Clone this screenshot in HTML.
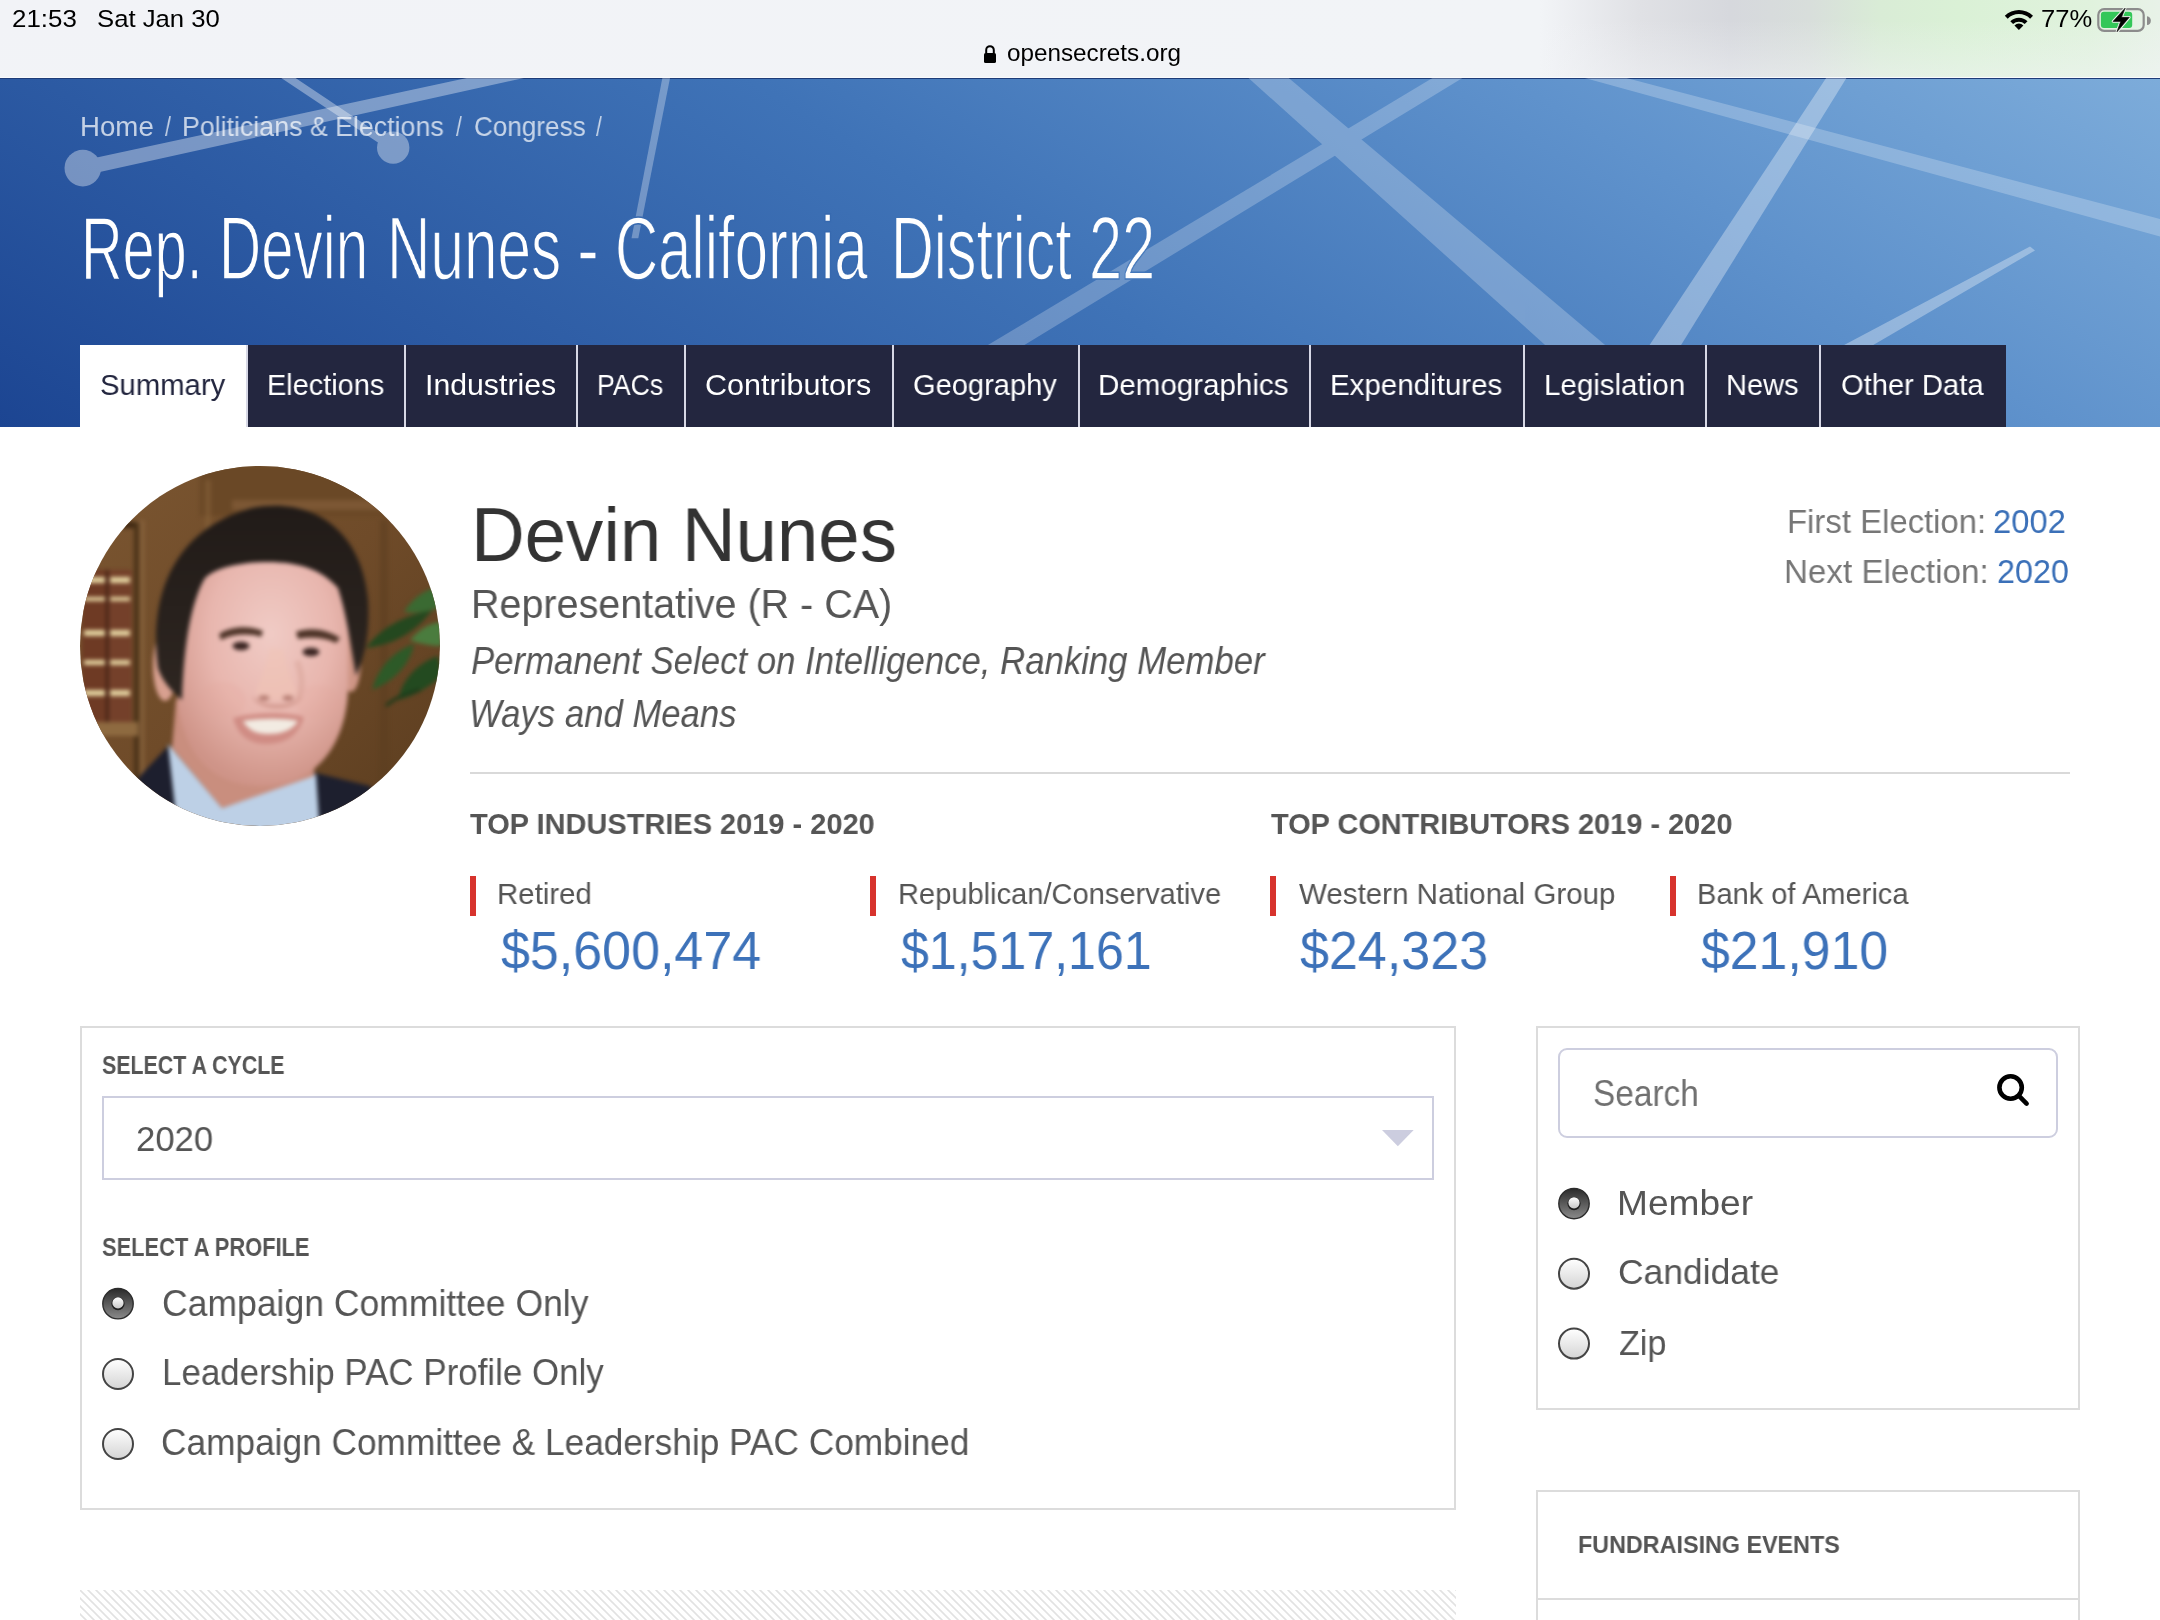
<!DOCTYPE html>
<html><head><meta charset="utf-8">
<style>
*{margin:0;padding:0;box-sizing:border-box}
html,body{width:2160px;height:1620px;overflow:hidden;background:#fff}
body{position:relative;font-family:"Liberation Sans",sans-serif}
.t{position:absolute;white-space:nowrap;transform-origin:0 0;will-change:transform}
.abs{position:absolute}
#status{left:0;top:0;width:2160px;height:78px;background:linear-gradient(90deg,#f2f3f7 0px,#f2f4f7 1540px,#e0e1e5 1640px,#d6d8dd 1730px,#d8dedb 1810px,#d9ecd6 1880px,#daf1d6 1960px,#e0f2dd 2090px,#e8f2e8 2160px)}
#statusfade{left:0;top:0;width:2160px;height:78px;background:linear-gradient(180deg,rgba(242,244,247,0) 0px,rgba(242,244,247,0) 20px,rgba(242,244,247,.45) 77px)}
#hdr{left:0;top:78px;width:2160px;height:349px;overflow:hidden;background:linear-gradient(32deg,#1c4592 0%,#3f73b7 48%,#5f92cc 76%,#7dacda 100%)}
.tab{position:absolute;top:345px;height:82px;background:#23263f}
.box{position:absolute;border:2px solid #dcdcdc;background:#fff}
.redbar{position:absolute;width:6px;height:40px;background:#d7332d}
</style></head>
<body>
<!-- STATUS BAR -->
<div id="status" class="abs"></div>
<div id="statusfade" class="abs"></div>
<div class="abs" style="left:0;top:77px;width:2160px;height:1px;background:#fafbfd"></div>
<svg class="abs" style="left:0;top:0" width="2160" height="78" viewBox="0 0 2160 78">
  <!-- lock -->
  <path d="M986.2 53.5 V50 A3.8 3.8 0 0 1 993.8 50 V53.5" fill="none" stroke="#000" stroke-width="2"/>
  <rect x="984" y="53" width="12" height="10" rx="1.6" fill="#000"/>
  <!-- wifi -->
  <g fill="#000">
    <path d="M2018.9 29.9 L2014.45 25.45 A6.3 6.3 0 0 1 2023.35 25.45 Z"/>
    <path d="M2010.3 21.3 A12.2 12.2 0 0 1 2027.5 21.3 L2024.7 24.1 A8.2 8.2 0 0 0 2013.1 24.1 Z"/>
    <path d="M2004.8 15.8 A20 20 0 0 1 2033 15.8 L2030.1 18.7 A15.9 15.9 0 0 0 2007.7 18.7 Z"/>
  </g>
  <!-- battery -->
  <rect x="2098.3" y="9.2" width="45.4" height="21.6" rx="5.8" fill="none" stroke="#8c8c8c" stroke-width="2.2"/>
  <path d="M2147 16.2 A4.5 4.5 0 0 1 2147 25.1 Z" fill="#8c8c8c"/>
  <rect x="2100.9" y="11.8" width="31.3" height="16.3" rx="3" fill="#34c759"/>
  <path d="M2125.2 8.1 L2113 21.4 L2120.7 21.4 L2117 31.8 L2129.3 17.3 L2121.5 17.3 Z" fill="#eef5ec" stroke="#eef5ec" stroke-width="2.6" stroke-linejoin="round"/>
  <path d="M2125.2 8.1 L2113 21.4 L2120.7 21.4 L2117 31.8 L2129.3 17.3 L2121.5 17.3 Z" fill="#000" stroke="#000" stroke-width=".6" stroke-linejoin="round"/>
</svg>

<!-- HEADER -->
<div id="hdr" class="abs">
<div class="abs" style="left:0;top:0;width:2160px;height:1px;background:#1e3c78"></div>
<svg class="abs" style="left:0;top:0" width="2160" height="349" viewBox="0 78 2160 349">
  <g fill="#ffffff" opacity=".36">
    <polygon points="82.8,160.4 560,58 560,70 82.8,175.8"/>
    <circle cx="82.8" cy="168.1" r="18.3"/>
  </g>
  <g fill="#ffffff" opacity=".36">
    <polygon points="278.6,66.7 395.1,144.4 390.7,151 274.2,73.3"/>
    <circle cx="393.2" cy="147.6" r="16.2"/>
  </g>
  <g fill="#ffffff" opacity=".30">
    <polygon points="663.9,70 671.6,70 638.3,238.2 631.5,238.2"/>
  </g>
  <g fill="#ffffff" opacity=".23">
    <polygon points="1239.6,70 1279.2,70 1611,350 1550.6,350"/>
    <polygon points="1445.8,70 1475.6,70 1016.2,350 979.6,350"/>
    <polygon points="1550,57.8 2170,221.7 2170,239.3 1550,68.4"/>
  </g>
  <g fill="#ffffff" opacity=".33">
    <polygon points="1831.4,70 1851.4,70 1678,350 1646.3,350"/>
    <polygon points="2030,246.5 2035,250.5 1864.7,350 1834.7,350"/>
  </g>
</svg>
</div>

<!-- TABS -->
<div class="abs" style="left:80px;top:345px;width:166px;height:82px;background:#fff"></div>
<div class="abs" style="left:246px;top:345px;width:1760px;height:82px;background:#d6d7e5"></div>
<div class="tab" style="left:248px;width:156px"></div>
<div class="tab" style="left:406px;width:170px"></div>
<div class="tab" style="left:578px;width:106px"></div>
<div class="tab" style="left:686px;width:206px"></div>
<div class="tab" style="left:894px;width:184px"></div>
<div class="tab" style="left:1080px;width:229px"></div>
<div class="tab" style="left:1311px;width:212px"></div>
<div class="tab" style="left:1525px;width:180px"></div>
<div class="tab" style="left:1707px;width:112px"></div>
<div class="tab" style="left:1821px;width:185px"></div>

<svg class="abs" style="left:80px;top:466px" width="360" height="360" viewBox="80 466 360 360">
  <defs>
    <clipPath id="pc"><circle cx="260" cy="646" r="180"/></clipPath>
    <linearGradient id="wood" x1="0" y1="0" x2="1" y2="1">
      <stop offset="0" stop-color="#7b5631"/>
      <stop offset=".5" stop-color="#6f4b29"/>
      <stop offset="1" stop-color="#5b3d1f"/>
    </linearGradient>
    <radialGradient id="skin" cx=".55" cy=".35" r=".65">
      <stop offset="0" stop-color="#f0cbc5"/>
      <stop offset=".55" stop-color="#e8b6ae"/>
      <stop offset="1" stop-color="#cf9488"/>
    </radialGradient>
    <linearGradient id="hair" x1="0" y1="0" x2="0" y2="1">
      <stop offset="0" stop-color="#211b18"/>
      <stop offset="1" stop-color="#2e2621"/>
    </linearGradient>
    <filter id="soft" filterUnits="userSpaceOnUse" x="60" y="446" width="400" height="400" color-interpolation-filters="sRGB"><feGaussianBlur stdDeviation="2"/></filter>
  </defs>
  <g clip-path="url(#pc)">
    <rect x="80" y="466" width="360" height="360" fill="url(#wood)"/>
    <g filter="url(#soft)">
    <!-- wood panels -->
    <rect x="200" y="466" width="240" height="50" fill="#6a4826"/>
    <rect x="205" y="480" width="6" height="350" fill="#866038" opacity=".6"/>
    <rect x="232" y="500" width="208" height="10" fill="#8a6440" opacity=".55"/>
    <rect x="135" y="520" width="10" height="310" fill="#8b6540" opacity=".6"/>
    <rect x="380" y="520" width="8" height="300" fill="#5c3e20" opacity=".5"/>
    <!-- books -->
    <rect x="80" y="522" width="58" height="6" fill="#3e2712"/>
    <rect x="134" y="522" width="5" height="310" fill="#4a3218"/>
    <rect x="82" y="570" width="25" height="152" fill="#6e3a24"/>
    <rect x="108" y="570" width="24" height="152" fill="#74402a"/>
    <rect x="106" y="570" width="2.5" height="152" fill="#3e1f12"/>
    <g fill="#e4d3a0">
      <rect x="84" y="577" width="21" height="6"/><rect x="110" y="577" width="20" height="6"/>
      <rect x="84" y="597" width="21" height="4"/><rect x="110" y="597" width="20" height="4"/>
      <rect x="84" y="630" width="21" height="6"/><rect x="110" y="630" width="20" height="6"/>
      <rect x="84" y="660" width="21" height="5"/><rect x="110" y="660" width="20" height="5"/>
      <rect x="84" y="690" width="21" height="6"/><rect x="110" y="690" width="20" height="6"/>
    </g>
    <rect x="80" y="722" width="58" height="14" fill="#8e6a40"/>
    <!-- plant -->
    <g>
      <path d="M366 648 C380 628 405 615 432 610 C418 630 395 645 366 648 Z" fill="#24481f"/>
      <path d="M404 612 C414 596 428 588 442 586 L442 606 C430 612 418 614 404 612 Z" fill="#3a6a32"/>
      <path d="M372 690 C378 668 392 652 414 644 C410 664 396 680 372 690 Z" fill="#2d5a28"/>
      <path d="M398 700 C402 680 416 664 438 656 L442 676 C428 688 414 696 398 700 Z" fill="#234a20"/>
      <path d="M410 640 C420 628 432 622 442 622 L442 646 C432 646 420 644 410 640 Z" fill="#4a7c3e"/>
      <path d="M386 706 C392 700 404 694 420 690" stroke="#1c3a1a" stroke-width="3" fill="none"/>
    </g>
    <!-- suit -->
    <path d="M110 835 L140 776 L170 744 L185 835 Z" fill="#1d1f2e"/>
    <path d="M312 772 L370 786 L400 835 L310 835 Z" fill="#1d1f2e"/>
    <!-- shirt -->
    <path d="M168 744 L222 808 L316 774 L320 835 L178 835 Z" fill="#bdd0e6"/>
    <!-- neck -->
    <path d="M176 700 L318 700 L314 776 L222 808 L172 748 Z" fill="#c98e7e"/>
    <!-- ears -->
    <ellipse cx="165" cy="666" rx="12" ry="35" fill="#d8a090"/>
    <ellipse cx="351" cy="660" rx="10" ry="32" fill="#cf9686"/>
    <!-- face -->
    <path d="M176 610 C176 565 212 552 262 552 C315 552 348 566 348 612 L348 690 C346 742 318 786 262 786 C206 786 180 745 177 695 Z" fill="url(#skin)"/>
    <!-- hair -->
    <path d="M158 668 C148 590 178 528 252 508 C312 496 362 530 368 600 C370 635 364 658 356 676 C350 640 346 612 338 588 C322 570 300 562 268 562 C240 562 215 568 205 578 C192 600 184 640 182 700 C170 690 162 680 158 668 Z" fill="url(#hair)"/>
    <!-- brows -->
    <path d="M219 634 C230 626 250 625 263 631 L261 637 C249 633 233 634 221 640 Z" fill="#4e3428"/>
    <path d="M296 632 C309 627 327 629 340 638 L336 643 C324 637 310 637 298 639 Z" fill="#4e3428"/>
    <!-- eyes -->
    <ellipse cx="241" cy="646" rx="8.5" ry="4.2" fill="#3a2522"/>
    <ellipse cx="311" cy="652" rx="8.5" ry="4.2" fill="#3a2522"/>
    <!-- nose -->
    <path d="M270 648 C266 668 258 684 256 693 C262 702 290 703 298 693 C292 682 286 668 284 650 Z" fill="#f0c4b6" opacity=".55"/>
    <path d="M252 696 C262 708 292 708 302 696 C296 712 258 712 252 696 Z" fill="#b87466" opacity=".55"/>
    <ellipse cx="264" cy="698" rx="5.5" ry="2.8" fill="#9a5a50" opacity=".65"/>
    <ellipse cx="288" cy="698" rx="5.5" ry="2.8" fill="#9a5a50" opacity=".65"/>
    <path d="M300 660 C306 676 306 690 300 700 L296 698 C300 688 300 676 294 662 Z" fill="#c48676" opacity=".25"/>
    <!-- cheeks -->
    <ellipse cx="222" cy="700" rx="24" ry="18" fill="#e6a49a" opacity=".18"/>
    <ellipse cx="318" cy="702" rx="22" ry="17" fill="#e6a49a" opacity=".18"/>
    <!-- mouth -->
    <path d="M233 718 C256 712 286 712 304 717 C298 738 282 744 266 744 C250 744 238 736 233 718 Z" fill="#d08c84"/>
    <path d="M243 721 C262 718 284 718 298 721 C292 731 280 734 268 734 C256 734 248 730 243 721 Z" fill="#f2ebe2"/>
    </g>
  </g>
</svg>


<!-- separator -->
<div class="abs" style="left:470px;top:772px;width:1600px;height:2px;background:#d9d9d9"></div>
<!-- red bars -->
<div class="redbar" style="left:470px;top:876px"></div>
<div class="redbar" style="left:870px;top:876px"></div>
<div class="redbar" style="left:1270px;top:876px"></div>
<div class="redbar" style="left:1670px;top:876px"></div>

<!-- LOWER LEFT BOX -->
<div class="box" style="left:80px;top:1026px;width:1376px;height:484px"></div>
<div class="abs" style="left:102px;top:1096px;width:1332px;height:84px;border:2px solid #cdcedf;background:#fff"></div>
<svg class="abs" style="left:1382px;top:1130px" width="32" height="17" viewBox="0 0 32 17"><path d="M0 0 H31.7 L15.85 16.2 Z" fill="#cccddf"/></svg>
<svg class="abs" style="left:80px;top:1590px" width="1376" height="30" viewBox="0 0 1376 30">
  <defs><pattern id="hatch" x="0" y="0" width="8" height="8" patternUnits="userSpaceOnUse">
    <path d="M-2 -2 L10 10 M-2 6 L2 10 M6 -2 L10 2" stroke="#e2e2e2" stroke-width="1.6"/>
  </pattern></defs>
  <rect x="0" y="0" width="1376" height="30" fill="url(#hatch)"/>
</svg>

<!-- RIGHT BOX -->
<div class="box" style="left:1536px;top:1026px;width:544px;height:384px"></div>
<div class="abs" style="left:1558px;top:1048px;width:500px;height:90px;border:2px solid #cdcedf;border-radius:9px;background:#fff"></div>
<svg class="abs" style="left:1990px;top:1068px" width="44" height="44" viewBox="1990 1068 44 44">
  <circle cx="2010.6" cy="1087.5" r="11.2" fill="none" stroke="#000" stroke-width="4.6"/>
  <line x1="2019.2" y1="1096.2" x2="2026.6" y2="1103.6" stroke="#000" stroke-width="4.6" stroke-linecap="round"/>
</svg>
<div class="box" style="left:1536px;top:1490px;width:544px;height:200px"></div>
<div class="abs" style="left:1538px;top:1598px;width:540px;height:2px;background:#dcdcdc"></div>

<svg class="abs" style="left:0;top:1180px" width="2160" height="290" viewBox="0 1180 2160 290">
  <defs>
    <linearGradient id="rOn" x1="0" y1="0" x2="0" y2="1"><stop offset="0" stop-color="#2a2a2a"/><stop offset="1" stop-color="#8a8a8a"/></linearGradient>
    <linearGradient id="rDot" x1="0" y1="0" x2="0" y2="1"><stop offset="0" stop-color="#ffffff"/><stop offset="1" stop-color="#c8c8c8"/></linearGradient>
    <linearGradient id="rOff" x1="0" y1="0" x2="0" y2="1"><stop offset="0" stop-color="#ffffff"/><stop offset="1" stop-color="#d4d4d4"/></linearGradient>
  </defs>
  <g id="on1">
    <circle cx="118" cy="1303.7" r="15.2" fill="url(#rOn)" stroke="#2c2c2c" stroke-width="1.4"/>
    <circle cx="118" cy="1303.7" r="6.6" fill="#1e1e1e"/>
    <circle cx="118" cy="1302.9" r="5.6" fill="url(#rDot)"/>
  </g>
  <circle cx="118" cy="1374" r="15" fill="url(#rOff)" stroke="#444" stroke-width="2"/>
  <circle cx="118" cy="1444" r="15" fill="url(#rOff)" stroke="#444" stroke-width="2"/>
  <g>
    <circle cx="1574" cy="1203.6" r="15.2" fill="url(#rOn)" stroke="#2c2c2c" stroke-width="1.4"/>
    <circle cx="1574" cy="1203.6" r="6.6" fill="#1e1e1e"/>
    <circle cx="1574" cy="1202.8" r="5.6" fill="url(#rDot)"/>
  </g>
  <circle cx="1574" cy="1273.7" r="15" fill="url(#rOff)" stroke="#444" stroke-width="2"/>
  <circle cx="1574" cy="1343.6" r="15" fill="url(#rOff)" stroke="#444" stroke-width="2"/>
</svg>


<div class="t" style="left:11.95px;top:8.11px;font-size:23.26px;line-height:23.26px;color:#000;transform:scaleX(1.1134);">21:53</div>
<div class="t" style="left:97.19px;top:8.11px;font-size:23.26px;line-height:23.26px;color:#000;transform:scaleX(1.1054);">Sat Jan 30</div>
<div class="t" style="left:1006.99px;top:41.27px;font-size:24.13px;line-height:24.13px;color:#000;transform:scaleX(1.0055);">opensecrets.org</div>
<div class="t" style="left:2040.71px;top:7.08px;font-size:24.71px;line-height:24.71px;color:#000;transform:scaleX(1.0347);">77%</div>
<div class="t" style="left:79.83px;top:114.11px;font-size:27.04px;line-height:27.04px;color:rgba(255,255,255,.72);transform:scaleX(1.0229);">Home</div>
<div class="t" style="left:164.50px;top:114.11px;font-size:27.04px;line-height:27.04px;color:rgba(255,255,255,.72);transform:scaleX(0.7869);">/</div>
<div class="t" style="left:182.20px;top:114.11px;font-size:27.04px;line-height:27.04px;color:rgba(255,255,255,.72);transform:scaleX(0.9896);">Politicians &amp; Elections</div>
<div class="t" style="left:455.60px;top:114.11px;font-size:27.04px;line-height:27.04px;color:rgba(255,255,255,.72);transform:scaleX(0.7738);">/</div>
<div class="t" style="left:473.59px;top:114.11px;font-size:27.04px;line-height:27.04px;color:rgba(255,255,255,.72);transform:scaleX(0.9652);">Congress</div>
<div class="t" style="left:596.30px;top:114.11px;font-size:27.04px;line-height:27.04px;color:rgba(255,255,255,.72);transform:scaleX(0.7738);">/</div>
<div class="t" style="left:81.00px;top:203.65px;font-size:89.83px;line-height:89.83px;color:#ffffff;transform:scaleX(0.6414);-webkit-text-stroke:1.5px rgb(39,84,158);">Rep.</div>
<div class="t" style="left:219.19px;top:203.65px;font-size:89.83px;line-height:89.83px;color:#ffffff;transform:scaleX(0.6492);-webkit-text-stroke:1.5px rgb(43,89,162);">Devin</div>
<div class="t" style="left:386.54px;top:203.65px;font-size:89.83px;line-height:89.83px;color:#ffffff;transform:scaleX(0.6705);-webkit-text-stroke:1.5px rgb(48,96,167);">Nunes</div>
<div class="t" style="left:576.69px;top:203.65px;font-size:89.83px;line-height:89.83px;color:#ffffff;transform:scaleX(0.7334);-webkit-text-stroke:1.5px rgb(51,99,170);">-</div>
<div class="t" style="left:615.30px;top:203.65px;font-size:89.83px;line-height:89.83px;color:#ffffff;transform:scaleX(0.6658);-webkit-text-stroke:1.5px rgb(55,105,175);">California</div>
<div class="t" style="left:890.98px;top:203.65px;font-size:89.83px;line-height:89.83px;color:#ffffff;transform:scaleX(0.6585);-webkit-text-stroke:1.5px rgb(62,114,182);">District</div>
<div class="t" style="left:1088.51px;top:203.65px;font-size:89.83px;line-height:89.83px;color:#ffffff;transform:scaleX(0.6615);-webkit-text-stroke:1.5px rgb(67,119,186);">22</div>
<div class="t" style="left:99.77px;top:370.07px;font-size:29.80px;line-height:29.80px;color:#23263f;transform:scaleX(0.9826);">Summary</div>
<div class="t" style="left:266.70px;top:370.07px;font-size:29.80px;line-height:29.80px;color:#ffffff;transform:scaleX(0.9702);">Elections</div>
<div class="t" style="left:424.51px;top:370.07px;font-size:29.80px;line-height:29.80px;color:#ffffff;transform:scaleX(1.0151);">Industries</div>
<div class="t" style="left:597.37px;top:370.07px;font-size:29.80px;line-height:29.80px;color:#ffffff;transform:scaleX(0.8958);">PACs</div>
<div class="t" style="left:705.16px;top:370.07px;font-size:29.80px;line-height:29.80px;color:#ffffff;transform:scaleX(1.0246);">Contributors</div>
<div class="t" style="left:912.96px;top:370.07px;font-size:29.80px;line-height:29.80px;color:#ffffff;transform:scaleX(0.9752);">Geography</div>
<div class="t" style="left:1098.25px;top:370.07px;font-size:29.80px;line-height:29.80px;color:#ffffff;transform:scaleX(0.9915);">Demographics</div>
<div class="t" style="left:1330.25px;top:370.07px;font-size:29.80px;line-height:29.80px;color:#ffffff;transform:scaleX(0.9905);">Expenditures</div>
<div class="t" style="left:1543.85px;top:370.07px;font-size:29.80px;line-height:29.80px;color:#ffffff;transform:scaleX(0.9909);">Legislation</div>
<div class="t" style="left:1726.08px;top:370.07px;font-size:29.80px;line-height:29.80px;color:#ffffff;transform:scaleX(0.9760);">News</div>
<div class="t" style="left:1841.26px;top:370.07px;font-size:29.80px;line-height:29.80px;color:#ffffff;transform:scaleX(0.9778);">Other Data</div>
<div class="t" style="left:470.79px;top:498.01px;font-size:75.58px;line-height:75.58px;color:#333333;transform:scaleX(0.9843);">Devin Nunes</div>
<div class="t" style="left:470.72px;top:585.41px;font-size:40.26px;line-height:40.26px;color:#555555;transform:scaleX(0.9808);">Representative (R - CA)</div>
<div class="t" style="left:471.46px;top:642.06px;font-size:38.66px;line-height:38.66px;color:#555555;transform:scaleX(0.8987);font-style:italic;">Permanent Select on Intelligence, Ranking Member</div>
<div class="t" style="left:469.29px;top:695.26px;font-size:38.66px;line-height:38.66px;color:#555555;transform:scaleX(0.8982);font-style:italic;">Ways and Means</div>
<div class="t" style="left:1786.83px;top:505.45px;font-size:33.72px;line-height:33.72px;color:#777777;transform:scaleX(0.9755);">First Election:</div>
<div class="t" style="left:1993.46px;top:505.45px;font-size:33.72px;line-height:33.72px;color:#3b70b8;transform:scaleX(0.9713);">2002</div>
<div class="t" style="left:1784.41px;top:555.45px;font-size:33.72px;line-height:33.72px;color:#777777;transform:scaleX(0.9834);">Next Election:</div>
<div class="t" style="left:1996.68px;top:555.45px;font-size:33.72px;line-height:33.72px;color:#3b70b8;transform:scaleX(0.9587);">2020</div>
<div class="t" style="left:470.35px;top:809.59px;font-size:29.07px;line-height:29.07px;color:#555555;transform:scaleX(0.9969);font-weight:bold;">TOP INDUSTRIES 2019 - 2020</div>
<div class="t" style="left:1270.75px;top:809.59px;font-size:29.07px;line-height:29.07px;color:#555555;transform:scaleX(0.9953);font-weight:bold;">TOP CONTRIBUTORS 2019 - 2020</div>
<div class="t" style="left:497.39px;top:878.60px;font-size:30.23px;line-height:30.23px;color:#555555;transform:scaleX(0.9738);">Retired</div>
<div class="t" style="left:897.82px;top:878.60px;font-size:30.23px;line-height:30.23px;color:#555555;transform:scaleX(0.9618);">Republican/Conservative</div>
<div class="t" style="left:1298.58px;top:878.60px;font-size:30.23px;line-height:30.23px;color:#555555;transform:scaleX(0.9778);">Western National Group</div>
<div class="t" style="left:1696.72px;top:878.60px;font-size:30.23px;line-height:30.23px;color:#555555;transform:scaleX(0.9613);">Bank of America</div>
<div class="t" style="left:500.70px;top:923.85px;font-size:54.51px;line-height:54.51px;color:#3d72b9;transform:scaleX(0.9534);">$5,600,474</div>
<div class="t" style="left:900.80px;top:923.85px;font-size:54.51px;line-height:54.51px;color:#3d72b9;transform:scaleX(0.9187);">$1,517,161</div>
<div class="t" style="left:1300.00px;top:923.85px;font-size:54.51px;line-height:54.51px;color:#3d72b9;transform:scaleX(0.9547);">$24,323</div>
<div class="t" style="left:1700.80px;top:923.85px;font-size:54.51px;line-height:54.51px;color:#3d72b9;transform:scaleX(0.9496);">$21,910</div>
<div class="t" style="left:102.17px;top:1052.83px;font-size:25.00px;line-height:25.00px;color:#555555;transform:scaleX(0.8552);font-weight:bold;">SELECT A CYCLE</div>
<div class="t" style="left:135.78px;top:1122.06px;font-size:34.88px;line-height:34.88px;color:#555555;transform:scaleX(0.9934);">2020</div>
<div class="t" style="left:102.15px;top:1235.13px;font-size:25.00px;line-height:25.00px;color:#555555;transform:scaleX(0.8755);font-weight:bold;">SELECT A PROFILE</div>
<div class="t" style="left:161.93px;top:1285.73px;font-size:36.34px;line-height:36.34px;color:#555555;transform:scaleX(0.9779);">Campaign Committee Only</div>
<div class="t" style="left:161.57px;top:1355.03px;font-size:36.34px;line-height:36.34px;color:#555555;transform:scaleX(0.9609);">Leadership PAC Profile Only</div>
<div class="t" style="left:161.25px;top:1425.23px;font-size:36.34px;line-height:36.34px;color:#555555;transform:scaleX(0.9702);">Campaign Committee &amp; Leadership PAC Combined</div>
<div class="t" style="left:1592.56px;top:1076.23px;font-size:36.34px;line-height:36.34px;color:#707070;transform:scaleX(0.9182);">Search</div>
<div class="t" style="left:1617.10px;top:1185.73px;font-size:35.76px;line-height:35.76px;color:#555555;transform:scaleX(1.0377);">Member</div>
<div class="t" style="left:1618.34px;top:1255.43px;font-size:35.76px;line-height:35.76px;color:#555555;transform:scaleX(0.9907);">Candidate</div>
<div class="t" style="left:1618.93px;top:1325.73px;font-size:35.76px;line-height:35.76px;color:#555555;transform:scaleX(0.9553);">Zip</div>
<div class="t" style="left:1578.17px;top:1532.98px;font-size:24.71px;line-height:24.71px;color:#555555;transform:scaleX(0.9443);font-weight:bold;">FUNDRAISING EVENTS</div>
</body></html>
